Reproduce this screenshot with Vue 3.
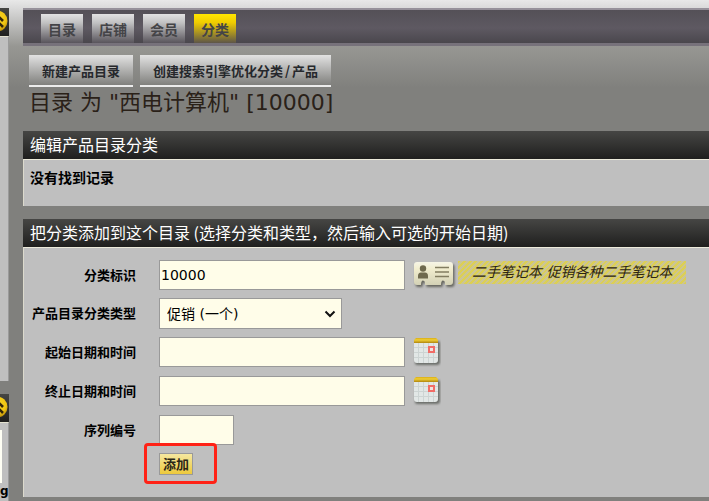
<script setup>
import { ref } from 'vue'

const tabs = ['目录', '店铺', '会员', '分类']
const active = '分类'
const categoryId = ref('10000')
const kind = ref('promo')
const fromDate = ref('')
const thruDate = ref('')
const sequence = ref('')
</script>

<template>
  <div class="page">
    <aside class="side">
      <section class="side-card side-card-main">
        <div class="side-head">
          <svg viewBox="0 0 9 28" class="collapse" aria-hidden="true"><use href="#collapse" /></svg>
        </div>
        <div class="side-body"></div>
      </section>
      <section class="side-card">
        <div class="side-head">
          <svg viewBox="0 0 9 28" class="collapse" aria-hidden="true"><use href="#collapse" /></svg>
        </div>
        <div class="side-body side-tail">
          <div class="side-list"></div>
          <span class="side-text">g</span>
        </div>
      </section>
    </aside>

    <main class="main">
      <nav class="tabs">
        <a v-for="t in tabs" :key="t" href="#" class="tab" :class="{ on: t === active }">{{ t }}</a>
      </nav>
      <div class="actions">
        <a href="#" class="action">新建产品目录</a>
        <a href="#" class="action">创建搜索引擎优化分类<span class="slash">/</span>产品</a>
      </div>
      <h1>目录 为 "西电计算机" [10000]</h1>

      <section class="panel">
        <h2>编辑产品目录分类</h2>
        <div class="panel-body empty">没有找到记录</div>
      </section>

      <section class="panel">
        <h2>把分类添加到这个目录 (选择分类和类型，然后输入可选的开始日期)</h2>
        <form class="panel-body form" @submit.prevent>
          <label for="cat">分类标识</label>
          <div class="field">
            <input id="cat" v-model="categoryId" type="text" />
            <button type="button" class="icon" aria-label="查找">
              <svg viewBox="0 0 44 30" width="44" height="30">
                <defs>
                  <linearGradient id="cardFill" x1="0" y1="0" x2="0" y2="1">
                    <stop offset="0" stop-color="#f6f5e6" />
                    <stop offset="0.3" stop-color="#f1edce" />
                    <stop offset="1" stop-color="#d3d1b6" />
                  </linearGradient>
                  <filter id="soft" x="-10%" y="-10%" width="120%" height="120%">
                    <feGaussianBlur stdDeviation="0.8" />
                  </filter>
                  <path id="card" d="M4 2 H37 Q40 2 40 5 V22 Q40 25 37 25 H32 V23 Q32 20.500 30 20.500 Q28 20.500 28 25 H12 V23 Q12 20.500 10 20.500 Q8 20.500 8 25 H4 Q1 25 1 22 V5 Q1 2 4 2 Z" />
                </defs>
                <use href="#card" x="1.500" y="2" fill="#66665e" filter="url(#soft)" />
                <use href="#card" fill="url(#cardFill)" />
                <circle cx="10" cy="8.500" r="3.200" fill="#6f6a4e" />
                <path d="M5 18.500 V16 Q5 12.500 8 12.500 H12 Q15 12.500 15 16 V18.500 Z" fill="#6f6a4e" />
                <path d="M22 7.500 H36 M22 12 H36 M22 16.500 H36" stroke="#827d60" stroke-width="1.700" />
              </svg>
            </button>
            <span class="tip">二手笔记本 促销各种二手笔记本</span>
          </div>

          <label for="kind">产品目录分类类型</label>
          <div class="field">
            <span class="select-wrap">
              <select id="kind" v-model="kind">
                <option value="promo">促销 (一个)</option>
              </select>
              <svg class="caret" viewBox="0 0 12 8" width="12" height="8" aria-hidden="true">
                <path d="M1.500 1.500 L6 6 L10.500 1.500" fill="none" stroke="#111" stroke-width="2" />
              </svg>
            </span>
          </div>

          <label for="from">起始日期和时间</label>
          <div class="field">
            <input id="from" v-model="fromDate" type="text" />
            <button type="button" class="icon" aria-label="选择起始日期">
              <svg viewBox="0 0 28 30" width="28" height="30"><use href="#calendar" /></svg>
            </button>
          </div>

          <label for="thru">终止日期和时间</label>
          <div class="field">
            <input id="thru" v-model="thruDate" type="text" />
            <button type="button" class="icon" aria-label="选择终止日期">
              <svg viewBox="0 0 28 30" width="28" height="30"><use href="#calendar" /></svg>
            </button>
          </div>

          <label for="seq">序列编号</label>
          <div class="field">
            <input id="seq" v-model="sequence" class="short" type="text" />
          </div>

          <div class="field submit">
            <button type="submit" class="add">添加</button>
            <span class="mark"></span>
          </div>
        </form>
      </section>
    </main>

    <svg class="defs" width="0" height="0" aria-hidden="true">
      <defs>
        <linearGradient id="calTop" x1="0" y1="0" x2="0" y2="1">
          <stop offset="0" stop-color="#d9ad17" />
          <stop offset="0.400" stop-color="#f0cf35" />
          <stop offset="1" stop-color="#b0850f" />
        </linearGradient>
        <radialGradient id="ball" gradientUnits="userSpaceOnUse" cx="-3" cy="10" r="13">
          <stop offset="0" stop-color="#f8d62a" />
          <stop offset="0.7" stop-color="#f0c512" />
          <stop offset="1" stop-color="#c0940c" />
        </radialGradient>
        <filter id="calSoft" x="-10%" y="-10%" width="120%" height="120%">
          <feGaussianBlur stdDeviation="0.8" />
        </filter>
        <symbol id="collapse" viewBox="0 0 9 28">
          <circle cx="-3" cy="13" r="10.500" fill="url(#ball)" />
          <path d="M-5 13 L-1 9 L3 13 M-5 19 L-1 15 L3 19" fill="none" stroke="#33260a" stroke-width="2.600" />
        </symbol>
        <symbol id="calendar" viewBox="0 0 28 30">
          <path d="M3 4 H26 Q27 5 27 7 V25 Q27 28 24 28 H5 Q3 28 2 27 Z" fill="#6c6e6b" filter="url(#calSoft)" />
          <path d="M1 5 H25 V23 Q25 26 22 26 H4 Q1 26 1 23 V4 Z" fill="#e2e7e6" />
          <path d="M5.500 6 V26 M10.500 6 V26 M15.500 6 V26 M20.500 6 V26 M1 10.500 H25 M1 15.500 H25 M1 20.500 H25" stroke="#cdd4d3" stroke-width="1" />
          <path d="M3 1 H23 L25 3 V6 H1 V3 Z" fill="url(#calTop)" />
          <rect x="16" y="10" width="5" height="5" fill="#f0e2e0" stroke="#f26c66" stroke-width="2" />
        </symbol>
      </defs>
    </svg>
  </div>
</template>

<style>
body {
  margin: 0;
  background: #80807d;
}
</style>

<style scoped>
* {
  box-sizing: border-box;
}
.page {
  display: flex;
  gap: 14px;
  min-height: 100vh;
  padding-top: 8px;
  overflow: hidden;
  font-family: "DejaVu Sans", "Noto Sans CJK SC", sans-serif;
  font-size: 14px;
  color: #000;
  background: linear-gradient(#e8e8e8 0, #dadada 8px, #979793 46px, #80807d 88px);
}
.defs {
  position: absolute;
}
.side {
  display: flex;
  flex-direction: column;
  gap: 13px;
  flex: 0 0 9px;
  overflow: hidden;
}
.side-card {
  display: flex;
  flex-direction: column;
}
.side-card-main {
  flex: 1;
}
.side-head {
  height: 28px;
  background: linear-gradient(#454543, #20201f);
}
.collapse {
  display: block;
  width: 9px;
  height: 28px;
}
.side-body {
  flex: 1;
  background: #bfbfbf;
  border-top: 1px solid #e4e2d0;
  border-right: 1px solid #9a9a9a;
}
.side-tail {
  padding-top: 7px;
}
.side-list {
  width: 2px;
  height: 53px;
  background: #fffff4;
}
.side-text {
  display: block;
  height: 18px;
  font-weight: 700;
  font-size: 12px;
  line-height: 16px;
}
.main {
  flex: 1;
  min-width: 0;
}
.tabs {
  display: flex;
  gap: 9px;
  height: 38px;
  padding: 4px 18px 0;
  border-top: 2px solid #96919a;
  border-bottom: 3px solid #77727b;
  background: linear-gradient(#545057, #5e5962 55%, #4a474d);
}
.tab {
  padding: 0 7px;
  font: 700 14px/30px "Noto Sans CJK SC", sans-serif;
  height: 29px;
  color: #444447;
  text-decoration: none;
  background: linear-gradient(#e2e2e2, #c2c2c3 30%, #59555c);
}
.tab.on {
  background: linear-gradient(#ffe600, #f0cc00 30%, #5e5648);
}
.actions {
  display: flex;
  gap: 7px;
  padding: 9px 6px 0;
}
.action {
  height: 32px;
  padding: 0 13px;
  border-bottom: 2px solid #ececec;
  font: 700 13px/32px "Noto Sans CJK SC", sans-serif;
  color: #26282c;
  text-decoration: none;
  white-space: nowrap;
  background: linear-gradient(#e2e2e2, #80807d);
}
.slash {
  padding: 0 2px;
}
h1 {
  margin: 0;
  padding: 0 6px 13px;
  font-size: 22px;
  font-weight: 400;
  line-height: 31px;
  color: #2a2118;
}
.panel {
  margin-bottom: 13px;
  background: #bfbfbf;
}
.panel:last-child {
  margin-bottom: 0;
}
h2 {
  margin: 0;
  padding: 0 7px 2px;
  font: 400 16px/26px "Noto Sans CJK SC", sans-serif;
  color: #fff;
  white-space: nowrap;
  background: linear-gradient(#464644, #1f1f1e);
}
.panel-body {
  border-top: 1px solid #eceadb;
  border-left: 1px solid #dcdacd;
}
.empty {
  padding: 7px 6px 19px;
  font: 700 14px/20px "Noto Sans CJK SC", sans-serif;
}
.form {
  display: grid;
  grid-template-columns: 112px 1fr;
  grid-template-rows: 30px 31px 31px 31px 30px auto;
  column-gap: 23px;
  row-gap: 8px;
  padding: 12px 0 22px;
}
label {
  font: 700 13px/30px "Noto Sans CJK SC", sans-serif;
  text-align: right;
  white-space: nowrap;
}
.field {
  display: flex;
  align-items: flex-start;
}
.submit {
  grid-column: 2;
  position: relative;
}
input,
select {
  width: 246px;
  height: 30px;
  padding: 0 1px;
  border: 1px solid #999;
  border-radius: 0;
  outline: 0;
  background: #fffde9;
  font: 14px "DejaVu Sans", "Noto Sans CJK SC", sans-serif;
  color: #000;
}
.short {
  width: 75px;
}
.select-wrap {
  display: grid;
  align-items: center;
}
.select-wrap > * {
  grid-area: 1 / 1;
}
select {
  width: 183px;
  height: 31px;
  padding: 0 7px;
  appearance: none;
}
.caret {
  justify-self: end;
  margin-right: 6px;
  pointer-events: none;
}
.icon {
  margin-left: 8px;
  padding: 0;
  border: 0;
  background: none;
}
.icon svg {
  display: block;
}
.tip {
  margin: 1px 0 0 1px;
  padding: 0 14px;
  font: italic 14px/23px "DejaVu Sans", "Noto Sans CJK SC", sans-serif;
  color: #2b2410;
  white-space: nowrap;
  background: repeating-linear-gradient(135deg, #dccf55 0 2px, #cbc595 2px 4px);
}
.add {
  height: 22px;
  padding: 0 3px;
  border: 1px solid #999;
  background: linear-gradient(#f5e7a0, #edc93c);
  font: 700 13px/20px "Noto Sans CJK SC", sans-serif;
  color: #2b2718;
}
.mark {
  position: absolute;
  top: -10px;
  left: -15px;
  width: 73px;
  height: 41px;
  border: 3px solid #ff2216;
  border-radius: 4px;
  pointer-events: none;
}
</style>
